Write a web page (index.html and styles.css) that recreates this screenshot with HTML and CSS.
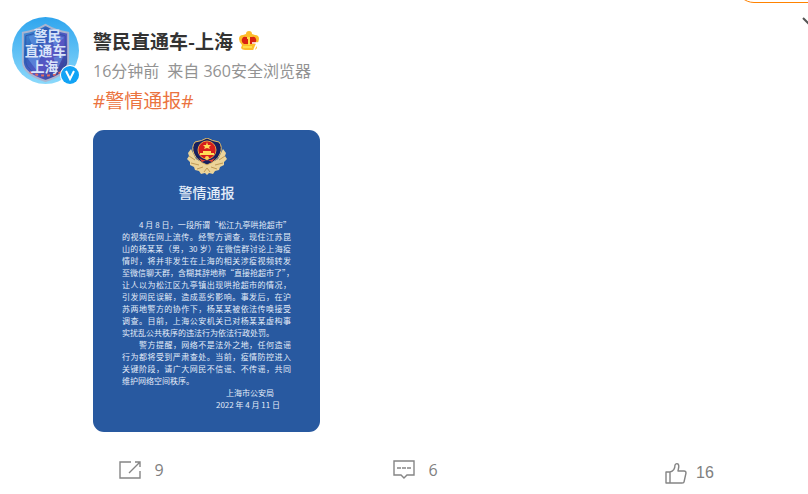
FILE: index.html
```html
<!DOCTYPE html>
<html lang="zh-CN">
<head>
<meta charset="utf-8">
<meta name="viewport" content="width=device-width, initial-scale=1">
<title>警民直通车-上海</title>
<link rel="stylesheet" href="styles.css">
</head>
<body>
<div class="prev-button"></div>
<article class="post">
  <a class="avatar" href="#" aria-label="警民直通车-上海">
    <svg class="avatar-pic" viewBox="0 0 68 68">
      <defs>
        <linearGradient id="sky" x1="0" y1="0" x2="0" y2="1"><stop offset="0" stop-color="#2fa5ee"/><stop offset="1" stop-color="#8bd9fb"/></linearGradient>
        <linearGradient id="shield" x1="0" y1="0" x2="1" y2="1"><stop offset="0" stop-color="#4c9fe0"/><stop offset=".3" stop-color="#2c62bb"/><stop offset=".6" stop-color="#5a55c4"/><stop offset="1" stop-color="#1c3579"/></linearGradient>
      </defs>
      <circle cx="34" cy="34" r="34" fill="url(#sky)"/>
      <path d="M11 16Q24 14 34 8Q44 14 57 16V46Q56 58 34 65Q12 58 11 46Z" fill="url(#shield)" stroke="#a9b4d0" stroke-width="2"/>
      <path d="M14 19Q25 17 34 12Q43 17 54 19V46Q53 55 34 61Q15 55 14 46Z" fill="none" stroke="#3155aa"/>
      <path d="M17 20L30 15L22 32ZM38 16L53 21L43 30ZM16 42L30 38L24 53ZM42 41L53 38L46 53Z" fill="#6797e6" opacity=".6"/>
      <path d="M18 56Q34 63 50 56" fill="none" stroke="#e56b60" stroke-width="2" stroke-dasharray="3 3"/>
      <g class="avatar-text" text-anchor="middle" font-size="14">
        <text x="36" y="24">警民</text>
        <text x="34" y="40">直通车</text>
        <text x="33" y="56">上海</text>
      </g>
    </svg>
    <svg class="verified" viewBox="0 0 20 20">
      <circle cx="10" cy="10" r="10" fill="#fff"/><circle cx="10" cy="10" r="9" fill="#12a3f5"/>
      <path d="M6 6L10 14L14 6" fill="none" stroke="#fff" stroke-width="2"/>
    </svg>
  </a>
  <div class="content">
    <header>
      <h1 class="name"><a href="#">警民直通车-上海</a>
        <svg class="crown" viewBox="0 0 20 20">
          <path d="M3 14Q0 11 0 8Q0 4 4 4L7 3Q7 0 10 0Q13 0 13 3L16 4Q20 4 20 8Q20 11 17 14L18 17Q17 19 14 19H6Q3 19 2 17Z" fill="#fdbd2a"/>
          <path d="M5 13Q2 11 3 8Q4 5 7 6H13Q16 5 17 8Q18 11 15 13Z" fill="#d92312"/>
          <path d="M4 16H13M8 7H10V14" fill="none" stroke="#ffdf45" stroke-width="2"/>
          <path d="M13 12H18L15 19" fill="none" stroke="#fff" stroke-width="1.6"/>
        </svg>
      </h1>
      <p class="meta"><time>16分钟前</time><span>来自 360安全浏览器</span></p>
    </header>
    <p class="topic"><a href="#">#警情通报#</a></p>
    <section class="notice">
      <svg class="emblem" viewBox="0 0 40 38">
        <path d="M4 11L1 15L2 18L0 21L3 24L3 27L7 29L8 32L12 33L14 36L18 35L20 37L22 35L26 36L28 33L32 32L33 29L37 27L37 24L40 21L38 18L39 15L36 11L31 21L20 27L9 21Z" fill="#ecd499"/>
        <path d="M2 18L8 22M4 25L12 27M10 31L16 29M38 18L32 22M36 25L28 27M30 31L24 29M17 34L20 30L23 34" fill="none" stroke="#bf9955"/>
        <path d="M20 0Q25 3 32 4Q36 9 33 16Q30 23 20 27Q10 23 7 16Q4 9 8 4Q15 3 20 0Z" fill="#17205e" stroke="#e9bf66"/>
        <circle cx="20" cy="12" r="9" fill="#d71e1c" stroke="#e99a48"/>
        <path d="M20 4L21 7H24L22 9L23 11L20 10L17 11L18 9L16 7H19Z" fill="#ffdc58"/>
        <path d="M16 13H24V15H27V17H13V15H16Z" fill="#ffdc58"/>
        <path d="M12 20Q20 25 28 20L25 24L20 22L15 24Z" fill="#e84430"/>
        <circle cx="20" cy="20" r="2" fill="#ffd253"/>
      </svg>
      <h2>警情通报</h2>
      <div class="notice-text">
        <p class="full indent">4 月 8 日，一段所谓“松江九亭哄抢超市”</p>
        <p class="full">的视频在网上流传。经警方调查，现住江苏昆</p>
        <p class="full">山的杨某某（男，30 岁）在微信群讨论上海疫</p>
        <p class="full">情时，将并非发生在上海的相关涉疫视频转发</p>
        <p class="full">至微信聊天群，含糊其辞地称“直接抢超市了”，</p>
        <p class="full">让人以为松江区九亭镇出现哄抢超市的情况，</p>
        <p class="full">引发网民误解，造成恶劣影响。事发后，在沪</p>
        <p class="full">苏两地警方的协作下，杨某某被依法传唤接受</p>
        <p class="full">调查。目前，上海公安机关已对杨某某虚构事</p>
        <p>实扰乱公共秩序的违法行为依法行政处罚。</p>
        <p class="full indent">警方提醒，网络不是法外之地，任何造谣</p>
        <p class="full">行为都将受到严肃查处。当前，疫情防控进入</p>
        <p class="full">关键阶段，请广大网民不信谣、不传谣，共同</p>
        <p>维护网络空间秩序。</p>
        <p class="signed">上海市公安局</p>
        <p class="dated">2022 年 4 月 11 日</p>
      </div>
    </section>
  </div>
  <button class="more" type="button" aria-label="更多"><svg viewBox="0 0 16 10"><path d="M1 1L8 8L15 1" fill="none" stroke="#555" stroke-width="2"/></svg></button>
</article>
<footer class="actions">
  <button type="button" aria-label="转发 9"><svg viewBox="0 0 24 20"><path d="M13 2H2V18H22V11M11 13L22 2M17 2H22V7" fill="none" stroke="#858585" stroke-width="1.4"/></svg><span>9</span></button>
  <button type="button" aria-label="评论 6"><svg viewBox="0 0 24 20"><path d="M2 1H22V15H15L12 18L9 15H2Z" fill="none" stroke="#858585" stroke-width="1.4"/><path d="M5 8H19" stroke="#858585" stroke-width="1.4" stroke-dasharray="4 1"/></svg><span>6</span></button>
  <button class="like" type="button" aria-label="赞 16"><svg viewBox="0 0 24 22"><path d="M2 10H6V21H2ZM6 10C10 9 11 6 11 3Q12 1 14 2C16 4 14 7 14 9H20Q22 9 22 11L20 20Q20 21 18 21H6" fill="none" stroke="#858585" stroke-width="1.4" stroke-linejoin="round"/></svg><span>16</span></button>
</footer>
</body>
</html>
```
FILE: styles.css
```css
* { box-sizing: border-box; }
html { overflow-x: hidden; }
body {
  margin: 0;
  position: relative;
  overflow: hidden;
  background: #fff;
  color: #333;
  font-family: "Noto Sans CJK SC", sans-serif;
}
h1, h2, p { margin: 0; }
a { color: inherit; text-decoration: none; }
button { padding: 0; border: 0; background: none; color: inherit; font: inherit; }
svg { display: block; }

.prev-button {
  position: absolute;
  top: -33px;
  right: -60px;
  width: 132px;
  height: 36px;
  border: 1px solid #ff8200;
  border-radius: 18px;
}
.post {
  position: relative;
  display: flex;
  align-items: flex-start;
  gap: 14px;
  padding: 17px 12px 0;
}
.avatar { position: relative; flex: none; width: 67px; }
.avatar-text {
  fill: #d9e5fa;
  font-family: "Liberation Sans", "Noto Sans CJK SC", sans-serif;
  font-weight: 700;
}
.verified { position: absolute; right: -1px; bottom: -1px; width: 20px; }
.content { flex: 1; padding-top: 10px; }
.name {
  display: flex;
  align-items: center;
  gap: 6px;
  font-size: 19px;
  line-height: 28px;
  font-weight: 700;
}
.crown { width: 20px; height: 20px; }
.meta {
  display: flex;
  gap: 8px;
  color: #939393;
  font-family: "Open Sans", "Noto Sans CJK SC", sans-serif;
  font-size: 16px;
  line-height: 32px;
}
.topic {
  color: #eb7340;
  font-family: "Open Sans", "Noto Sans CJK SC", sans-serif;
  font-size: 19px;
  line-height: 28px;
}
.notice {
  width: 227px;
  margin-top: 15px;
  padding: 8px 29px 21px;
  border-radius: 11px;
  background: #2859a0;
  color: #e3ecf8;
}
.emblem { width: 40px; height: 38px; margin: 0 auto; }
.notice h2 {
  margin: 6px 0 17px;
  font-size: 14px;
  line-height: 20px;
  font-weight: 500;
  text-align: center;
}
.notice-text { font-size: 8px; line-height: 12px; white-space: nowrap; }
.full { text-align-last: justify; }
.indent { padding-left: 17px; }
.signed { padding-right: 17px; text-align: right; }
.dated { padding-right: 11px; text-align: right; }
.more { position: absolute; top: 17px; right: -10px; width: 16px; }

.actions {
  display: grid;
  grid-template-columns: repeat(3, 1fr);
  align-items: start;
  margin: 26px -18px 0 4px;
  color: #808080;
  font-family: "Open Sans", "Noto Sans CJK SC", sans-serif;
  font-size: 16px;
  line-height: 24px;
}
.actions button {
  display: flex;
  align-items: center;
  justify-content: center;
  gap: 12px;
}
.actions svg { width: 24px; height: 20px; }
.actions .like {
  gap: 8px;
  padding-top: 3px;
  font-family: "Liberation Sans", sans-serif;
}
.actions .like svg { height: 22px; }
```
